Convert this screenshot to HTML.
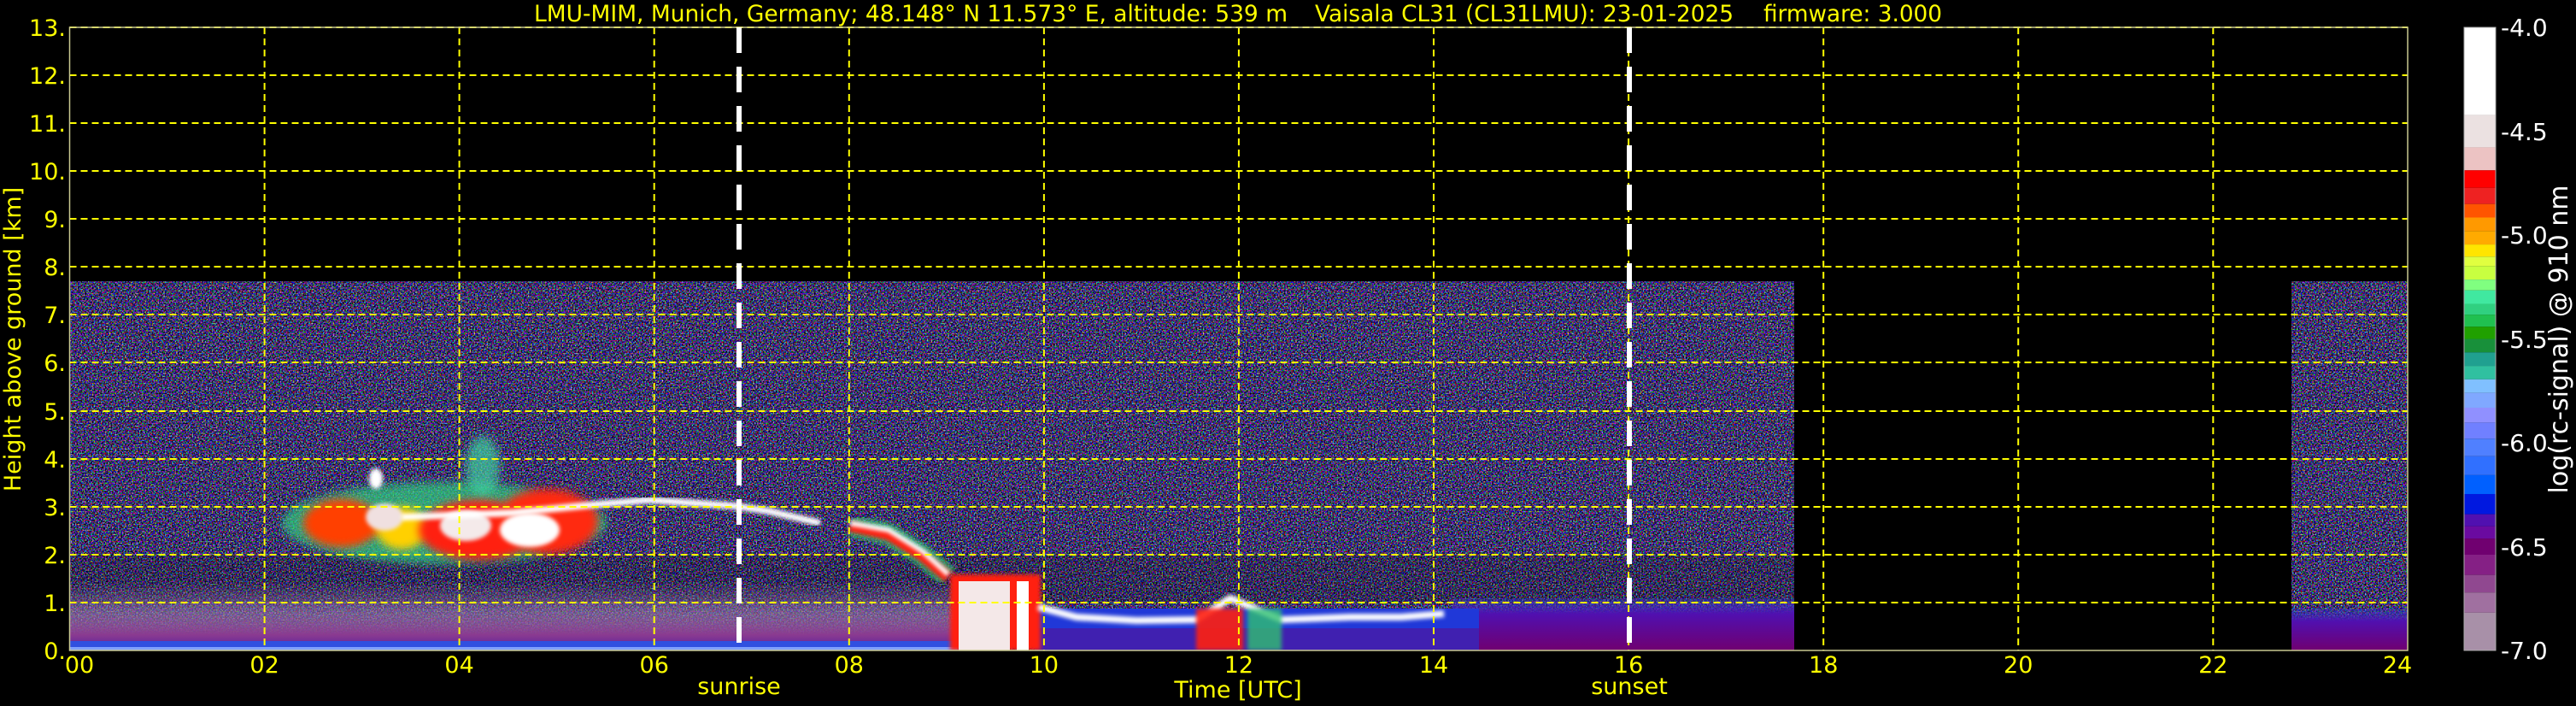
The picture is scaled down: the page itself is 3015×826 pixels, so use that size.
<!DOCTYPE html>
<html><head><meta charset="utf-8"><style>
html,body{margin:0;padding:0;background:#000;width:3015px;height:826px;overflow:hidden}
svg{display:block}
text{font-family:"DejaVu Sans","Liberation Sans",sans-serif;}
</style></head><body>
<svg width="3015" height="826" viewBox="0 0 3015 826" xmlns="http://www.w3.org/2000/svg">
<defs>
<filter id="nz" x="0" y="0" width="100%" height="100%" color-interpolation-filters="sRGB">
<feTurbulence type="fractalNoise" baseFrequency="0.6" numOctaves="1" seed="7" result="t"/>
<feColorMatrix in="t" type="matrix" values="2.6 0 0 0 -1.08  0 2.6 0 0 -1.12  0 0 2.6 0 -0.88  0 0 0 0 1"/>
</filter>
<filter id="bl" color-interpolation-filters="sRGB"><feGaussianBlur stdDeviation="5"/></filter>
<filter id="bl2" color-interpolation-filters="sRGB"><feGaussianBlur stdDeviation="2.5"/></filter>
<linearGradient id="bot" x1="0" y1="0" x2="0" y2="1">
<stop offset="0" stop-color="#9070a0" stop-opacity="0"/>
<stop offset="0.5" stop-color="#9a78a8" stop-opacity="0.6"/>
<stop offset="0.85" stop-color="#8a3a90" stop-opacity="1"/>
<stop offset="1" stop-color="#6a2a9a" stop-opacity="1"/>
</linearGradient>
<linearGradient id="pur" x1="0" y1="0" x2="0" y2="1">
<stop offset="0" stop-color="#3040d0" stop-opacity="0.3"/>
<stop offset="0.3" stop-color="#5010b0"/>
<stop offset="1" stop-color="#700070"/>
</linearGradient>
<clipPath id="pc"><rect x="81.5" y="32" width="2736.5" height="729"/></clipPath>
</defs>

<g clip-path="url(#pc)">
<rect x="81.5" y="329" width="2018.5" height="432" fill="#000" filter="url(#nz)"/>
<rect x="2682" y="329" width="136" height="432" fill="#000" filter="url(#nz)"/>
<rect x="81.5" y="649" width="2018.5" height="56" fill="#000" opacity="0.15"/>
<rect x="81.5" y="680" width="1040" height="74" fill="url(#bot)"/>
<rect x="81.5" y="750" width="1040" height="8" fill="#3050e0"/>
<rect x="81.5" y="757" width="1040" height="4" fill="#80a0ff"/>
<rect x="1700" y="700" width="400" height="61" fill="url(#pur)"/>
<rect x="1211" y="712" width="520" height="49" fill="#2038d8"/>
<rect x="1211" y="735" width="520" height="26" fill="#4020b0"/>
<rect x="2682" y="712" width="136" height="49" fill="url(#pur)"/>
<g filter="url(#bl)">
<ellipse cx="520" cy="612" rx="190" ry="48" fill="#30d080" opacity="0.7"/>
<ellipse cx="400" cy="612" rx="45" ry="28" fill="#ff4000"/>
<ellipse cx="470" cy="618" rx="30" ry="25" fill="#ffd000"/>
<ellipse cx="560" cy="620" rx="70" ry="35" fill="#ff2010"/>
<ellipse cx="640" cy="610" rx="60" ry="38" fill="#ff2a10"/>
<ellipse cx="565" cy="545" rx="20" ry="35" fill="#40d0a0" opacity="0.7"/>
</g>
<g filter="url(#bl2)">
<ellipse cx="450" cy="605" rx="22" ry="16" fill="#f0e0e0"/>
<ellipse cx="545" cy="615" rx="30" ry="18" fill="#f4eaea"/>
<ellipse cx="620" cy="620" rx="35" ry="20" fill="#fff"/>
<ellipse cx="440" cy="560" rx="8" ry="12" fill="#fff"/>
</g>
<path d="M470 605 L600 600 L700 590 L760 585 L860 592 L900 598 L960 612" stroke="#fff" stroke-width="8" fill="none" filter="url(#bl2)"/>
<g filter="url(#bl2)">
<path d="M995 615 L1040 625 L1080 650 L1110 675" stroke="#30c070" stroke-width="26" fill="none" opacity="0.7"/>
<path d="M995 615 L1040 625 L1080 650 L1110 675" stroke="#ff2010" stroke-width="14" fill="none"/>
<path d="M995 612 L1040 620 L1080 645 L1110 672" stroke="#fff" stroke-width="6" fill="none"/>
</g>
<rect x="1112" y="672" width="106" height="89" fill="#ff2010" filter="url(#bl2)"/>
<rect x="1122" y="680" width="60" height="81" fill="#f4e8e8"/>
<rect x="1190" y="680" width="14" height="81" fill="#fff"/>
<g filter="url(#bl2)">
<path d="M1215 710 L1260 722 L1330 726 L1400 725 L1440 700 L1500 725 L1580 722 L1640 722 L1690 718" stroke="#fff" stroke-width="8" fill="none"/>
<rect x="1400" y="712" width="55" height="49" fill="#ff2010" opacity="0.9"/>
<rect x="1460" y="712" width="40" height="49" fill="#30c070" opacity="0.8"/>
</g>
</g>

<g stroke="#ffff00" stroke-width="2" stroke-dasharray="8,5" fill="none">
<path d="M81.5 32H2818M81.5 88H2818M81.5 144H2818M81.5 200H2818M81.5 256H2818M81.5 312H2818M81.5 368H2818M81.5 424H2818M81.5 481H2818M81.5 537H2818M81.5 593H2818M81.5 649H2818M81.5 705H2818"/>
<path d="M309.6 32V761M537.6 32V761M765.7 32V761M993.8 32V761M1221.9 32V761M1449.9 32V761M1678 32V761M1906.1 32V761M2134.2 32V761M2362.2 32V761M2590.3 32V761"/>
</g>
<rect x="81.5" y="32" width="2736.5" height="729" fill="none" stroke="#c8c890" stroke-width="1.5"/>
<g stroke="#fff" stroke-width="6" stroke-dasharray="30,16">
<path d="M865 32V761M1907 32V761"/>
</g>

<g fill="#ffff00" font-size="27">
<text x="625" y="25" textLength="882" lengthAdjust="spacingAndGlyphs">LMU-MIM, Munich, Germany; 48.148° N 11.573° E, altitude: 539 m</text>
<text x="1539" y="25" textLength="490" lengthAdjust="spacingAndGlyphs">Vaisala CL31 (CL31LMU): 23-01-2025</text>
<text x="2064" y="25" textLength="209" lengthAdjust="spacingAndGlyphs">firmware: 3.000</text>
<g text-anchor="end">
<text x="77" y="42">13.</text><text x="77" y="98">12.</text><text x="77" y="154">11.</text><text x="77" y="210">10.</text>
<text x="77" y="266">9.</text><text x="77" y="322">8.</text><text x="77" y="378">7.</text><text x="77" y="434">6.</text>
<text x="77" y="491">5.</text><text x="77" y="547">4.</text><text x="77" y="603">3.</text><text x="77" y="659">2.</text>
<text x="77" y="715">1.</text><text x="77" y="771">0.</text>
</g>
<text transform="translate(24,397) rotate(-90)" text-anchor="middle">Height above ground [km]</text>
<g text-anchor="middle">
<text x="93" y="787">00</text><text x="309.6" y="787">02</text><text x="537.6" y="787">04</text><text x="765.7" y="787">06</text>
<text x="993.8" y="787">08</text><text x="1221.9" y="787">10</text><text x="1449.9" y="787">12</text><text x="1678" y="787">14</text>
<text x="1906.1" y="787">16</text><text x="2134.2" y="787">18</text><text x="2362.2" y="787">20</text><text x="2590.3" y="787">22</text>
<text x="2806" y="787">24</text>
<text x="865" y="812">sunrise</text>
<text x="1449" y="816">Time [UTC]</text>
<text x="1907" y="812">sunset</text>
</g>
</g>

<g transform="translate(0,32) scale(1,1.578) translate(0,-20)">
<rect x="2884" y="20" width="37" height="65" fill="#ffffff"/>
<rect x="2884" y="85" width="37" height="24" fill="#ebe1e1"/>
<rect x="2884" y="109" width="37" height="17" fill="#ecc3c3"/>
<rect x="2884" y="126" width="37" height="13" fill="#ff0000"/>
<rect x="2884" y="139" width="37" height="12" fill="#ee2222"/>
<rect x="2884" y="151" width="37" height="10" fill="#ff5500"/>
<rect x="2884" y="161" width="37" height="10" fill="#ff9900"/>
<rect x="2884" y="171" width="37" height="10" fill="#ffaa00"/>
<rect x="2884" y="181" width="37" height="9" fill="#ffe500"/>
<rect x="2884" y="190" width="37" height="7" fill="#e0ff40"/>
<rect x="2884" y="197" width="37" height="10" fill="#c8ff40"/>
<rect x="2884" y="207" width="37" height="8" fill="#80ff80"/>
<rect x="2884" y="215" width="37" height="10" fill="#40e8a0"/>
<rect x="2884" y="225" width="37" height="8" fill="#30d080"/>
<rect x="2884" y="233" width="37" height="9" fill="#20c050"/>
<rect x="2884" y="242" width="37" height="9" fill="#20a000"/>
<rect x="2884" y="251" width="37" height="10" fill="#18903a"/>
<rect x="2884" y="261" width="37" height="10" fill="#20a090"/>
<rect x="2884" y="271" width="37" height="10" fill="#30c0a0"/>
<rect x="2884" y="281" width="37" height="10" fill="#80c0ff"/>
<rect x="2884" y="291" width="37" height="11" fill="#80a8ff"/>
<rect x="2884" y="302" width="37" height="11" fill="#9090ff"/>
<rect x="2884" y="313" width="37" height="12" fill="#7080ff"/>
<rect x="2884" y="325" width="37" height="13" fill="#5080ff"/>
<rect x="2884" y="338" width="37" height="14" fill="#3070ff"/>
<rect x="2884" y="352" width="37" height="14" fill="#0060ff"/>
<rect x="2884" y="366" width="37" height="15" fill="#0018e0"/>
<rect x="2884" y="381" width="37" height="9" fill="#5010b0"/>
<rect x="2884" y="390" width="37" height="9" fill="#6a0aa0"/>
<rect x="2884" y="399" width="37" height="12" fill="#700070"/>
<rect x="2884" y="411" width="37" height="15" fill="#852085"/>
<rect x="2884" y="426" width="37" height="13" fill="#904890"/>
<rect x="2884" y="439" width="37" height="15" fill="#a070a0"/>
<rect x="2884" y="454" width="37" height="28" fill="#a890a8"/>
</g>
<rect x="2884" y="32" width="37" height="729" fill="none" stroke="#aaa" stroke-width="1"/>
<g fill="#fff" font-size="28">
<text x="2927" y="42">-4.0</text>
<text x="2927" y="164">-4.5</text>
<text x="2927" y="285">-5.0</text>
<text x="2927" y="407">-5.5</text>
<text x="2927" y="528">-6.0</text>
<text x="2927" y="650">-6.5</text>
<text x="2927" y="771">-7.0</text>
<text transform="translate(3005,397) rotate(-90)" text-anchor="middle" font-size="30">log(rc-signal) @ 910 nm</text>
</g>
</svg>
</body></html>
